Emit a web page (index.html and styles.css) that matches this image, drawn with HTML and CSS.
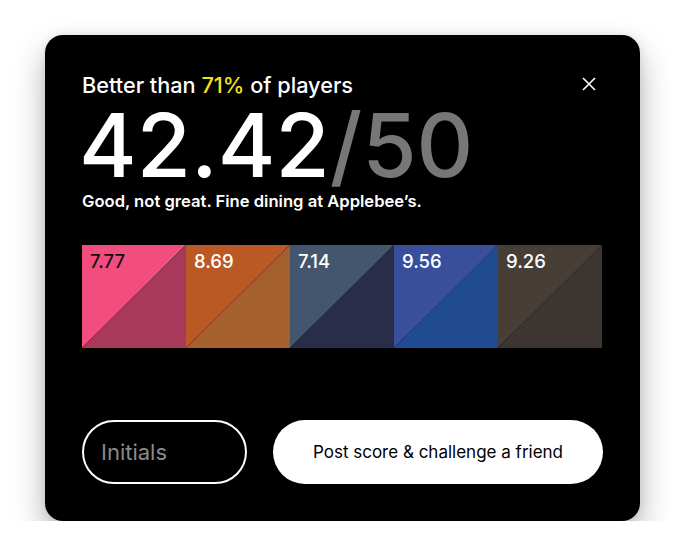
FILE: index.html
```html
<!DOCTYPE html>
<html lang="en">

<head>
    <meta charset="UTF-8">
    <meta name="viewport" content="width=device-width, initial-scale=1.0">
    <title>Results</title>
    <link rel="stylesheet" href="styles.css">
</head>

<body>
    <div class="card">
        <button class="close" aria-label="Close">
            <svg width="16" height="16" viewBox="0 0 16 16">
                <path d="M2 2 L14 14 M14 2 L2 14" stroke="#fff" stroke-width="1.6" fill="none" />
            </svg>
        </button>

        <p class="rank">Better than <span class="pct">71%</span> of players</p>
        <h1 class="score">42.42<span class="out-of">/50</span></h1>
        <p class="verdict">Good, not great. Fine dining at Applebee’s.</p>

        <div class="tiles">
            <div class="tile tile-1"><span class="dark">7.77</span></div>
            <div class="tile tile-2"><span>8.69</span></div>
            <div class="tile tile-3"><span>7.14</span></div>
            <div class="tile tile-4"><span>9.56</span></div>
            <div class="tile tile-5"><span>9.26</span></div>
        </div>

        <div class="actions">
            <input class="initials" type="text" placeholder="Initials">
            <button class="post">Post score &amp; challenge a friend</button>
        </div>
    </div>
</body>

</html>
```

FILE: styles.css
```css
* {
    box-sizing: border-box;
    font-family: 'Inter', sans-serif;
}

body {
    margin: 0;
    background-color: #fff;
}

.card {
    position: relative;
    width: 595px;
    height: 486px;
    margin: 35px 0 0 45px;
    padding: 37px;
    background-color: #000;
    border-radius: 18px;
    box-shadow: 0 16px 32px rgba(0, 0, 0, 0.3), 0 0 10px rgba(0, 0, 0, 0.08);
    color: #fff;
}

.close {
    position: absolute;
    top: 41px;
    right: 43px;
    width: 16px;
    height: 16px;
    padding: 0;
    border: none;
    background: none;
}

.close svg {
    display: block;
}

.rank {
    margin: 0;
    font-size: 21.7px;
    line-height: 1.2;
    font-weight: 500;
}

.pct {
    color: #f7e11b;
}

.score {
    margin: 2px 0 0 -3px;
    font-size: 88px;
    line-height: 90px;
    font-weight: 500;
}

.out-of {
    color: #777;
}

.verdict {
    margin: 2px 0 0;
    font-size: 16.6px;
    line-height: 1.2;
    font-weight: 600;
}

.tiles {
    display: flex;
    margin-top: 33px;
}

.tile {
    width: 104px;
    height: 103px;
    padding: 5px 8px;
    font-size: 18.5px;
    line-height: 1.2;
    font-weight: 500;
}

.tile .dark {
    color: #111;
}

/* top-left half lighter, bottom-right half darker */
.tile-1 {
    background: linear-gradient(to bottom right, #f24d7f 49.6%, #6a2a3c 50%, #a9395b 50.4%);
}

.tile-2 {
    background: linear-gradient(to bottom right, #ba5923 49.6%, #6d3a1c 50%, #a5602e 50.4%);
}

.tile-3 {
    background: linear-gradient(to bottom right, #43566d 49.6%, #222438 50%, #2a2d49 50.4%);
}

.tile-4 {
    background: linear-gradient(to bottom right, #3a4f9c 49.6%, #1e3566 50%, #214b90 50.4%);
}

.tile-5 {
    background: linear-gradient(to bottom right, #473f37 49.6%, #2a2522 50%, #3d3532 50.4%);
}

.actions {
    display: flex;
    gap: 26px;
    margin-top: 72px;
}

.initials {
    width: 165px;
    height: 64px;
    padding: 0 0 0 17px;
    border: 2px solid #fff;
    border-radius: 32px;
    background: #000;
    color: #fff;
    font-size: 22px;
    outline: none;
}

.initials::placeholder {
    color: #8a8a8a;
}

.post {
    flex: 1;
    height: 64px;
    border: none;
    border-radius: 32px;
    background: #fff;
    color: #000;
    font-size: 17px;
}
```
